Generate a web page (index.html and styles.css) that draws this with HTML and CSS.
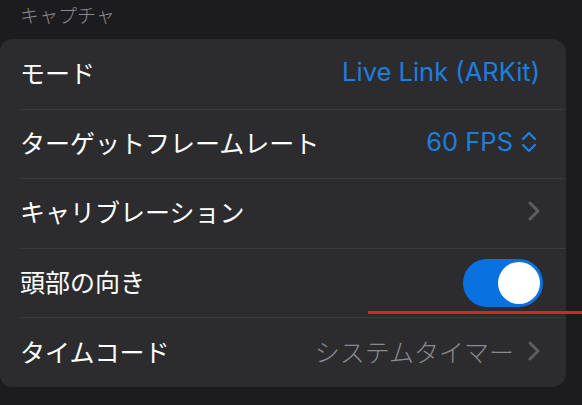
FILE: index.html
```html
<!DOCTYPE html>
<html lang="ja">
<head>
  <meta charset="UTF-8">
  <title>キャプチャ</title>
  <link rel="stylesheet" href="styles.css">
</head>
<body>
  <div class="page">
    <div class="section-title">キャプチャ</div>

    <div class="card">
      <div class="row">
        <span class="label">モード</span>
        <span class="value blue">Live Link (ARKit)</span>
      </div>
      <div class="row">
        <span class="label">ターゲットフレームレート</span>
        <span class="value blue">60 FPS
          <svg class="updown" width="16" height="24" viewBox="0 0 16 24"><path d="M2 9 L8 3 L14 9 M2 15 L8 21 L14 15" fill="none" stroke="#1a7fe0" stroke-width="2.4" stroke-linecap="round" stroke-linejoin="round"/></svg>
        </span>
      </div>
      <div class="row">
        <span class="label">キャリブレーション</span>
        <span class="value gray">
          <svg class="chev" width="12" height="20" viewBox="0 0 12 20"><path d="M2 2 L10 10 L2 18" fill="none" stroke="#5d5d62" stroke-width="3" stroke-linecap="round" stroke-linejoin="round"/></svg>
        </span>
      </div>
      <div class="row">
        <span class="label">頭部の向き</span>
        <span class="switch"><span class="knob"></span></span>
        <div class="redline"></div>
      </div>
      <div class="row">
        <span class="label">タイムコード</span>
        <span class="value gray">システムタイマー
          <svg class="chev" width="12" height="20" viewBox="0 0 12 20"><path d="M2 2 L10 10 L2 18" fill="none" stroke="#5d5d62" stroke-width="3" stroke-linecap="round" stroke-linejoin="round"/></svg>
        </span>
      </div>
    </div>
  </div>
</body>
</html>
```

FILE: styles.css
```css
body {
  margin: 0;
  background: #1c1c1e;
  font-family: "Inter", "Noto Sans CJK JP", sans-serif;
  color: #fff;
  overflow: hidden;
}

.page {
  width: 582px;
  height: 405px;
}

.section-title {
  height: 39px;
  padding-left: 20px;
  font-size: 19px;
  line-height: 30px;
  color: #8a8a8e;
  font-family: "Noto Sans CJK JP", sans-serif;
  font-weight: 300;
}

.card {
  width: 566px;
  background: #2c2c2e;
  border-radius: 12px 14px 14px 12px;
}

.row {
  position: relative;
  height: 69.6px;
  margin-left: 20px;
  padding-right: 26px;
  display: flex;
  align-items: center;
  justify-content: space-between;
  border-top: 1px solid #3a3a3c;
  box-sizing: border-box;
}

.row:first-child {
  border-top: none;
}

.label {
  font-size: 25px;
  font-family: "Noto Sans CJK JP", sans-serif;
  font-weight: 400;
  margin-top: -4px;
}

.value {
  display: flex;
  align-items: center;
  gap: 8px;
  font-size: 25.5px;
  margin-top: -4px;
}

.blue {
  color: #1a7fe0;
}

.gray {
  color: #8a8a8e;
  font-family: "Noto Sans CJK JP", sans-serif;
  font-size: 25px;
  font-weight: 300;
}

.gray .chev {
  margin-left: 6px;
}

.updown {
  margin-right: 3px;
}

.switch {
  width: 80px;
  height: 48px;
  border-radius: 24px;
  background: #0a72e0;
  margin-right: -3px;
  display: flex;
  align-items: center;
  justify-content: flex-end;
  padding-right: 3px;
  box-sizing: border-box;
}

.knob {
  width: 42px;
  height: 42px;
  border-radius: 50%;
  background: #fff;
}

.redline {
  position: absolute;
  left: 348px;
  right: -20px;
  bottom: 3px;
  height: 3px;
  background: #d0282a;
}
```
